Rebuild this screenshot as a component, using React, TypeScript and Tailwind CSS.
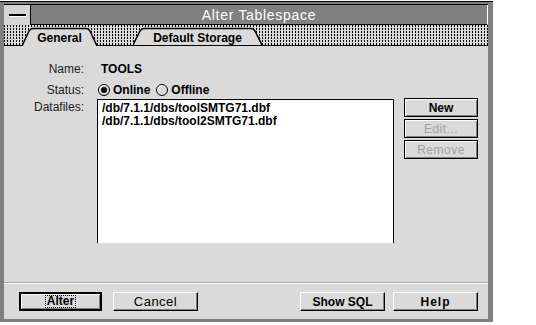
import React from 'react';

const face = 'bg-[#dadada]';

function Tab({ label, width, active }: { label: string; width: number; active?: boolean }) {
  const w = width;
  const h = active ? 21 : 20;
  return (
    <div className={`relative h-full flex items-center justify-center pt-[5px] ${active ? '' : 'border-b border-black'}`} style={{ width: w }}>
      <svg className="absolute inset-0" width={w} height={h} viewBox={`0 0 ${w} ${h}`}>
        <path
          d={`M0,${h} L7,6 Q8.5,3.5 11,3.5 L${w - 11},3.5 Q${w - 8.5},3.5 ${w - 7},6 L${w},${h}`}
          fill="#dadada"
          stroke="#000"
          strokeWidth={1.5}
        />
      </svg>
      <span className="relative font-bold text-[12px] leading-none text-black">{label}</span>
    </div>
  );
}

function Radio({ on }: { on?: boolean }) {
  return (
    <span className="w-[12px] h-[12px] rounded-full border border-black bg-[#dadada] flex items-center justify-center shadow-[inset_1px_1px_0_#ffffff]">
      {on && <span className="w-[6px] h-[6px] rounded-full bg-black" />}
    </span>
  );
}

function SideButton({ children, disabled }: { children: React.ReactNode; disabled?: boolean }) {
  return (
    <div className={`w-[74px] h-[19px] ${face} border border-black shadow-[inset_1px_1px_0_#ffffff,inset_-1px_-1px_0_#808080] flex items-center justify-center text-[12px] leading-none ${disabled ? 'text-[#a0a0a0] tracking-[0.5px]' : 'font-bold text-black'}`}>
      {children}
    </div>
  );
}

function BottomButton({ children, className = '' }: { children: React.ReactNode; className?: string }) {
  return (
    <div className={`w-[85px] h-[19px] ${face} border border-t-white border-l-white border-r-black border-b-black shadow-[inset_-1px_-1px_0_#808080] flex items-center justify-center text-[12px] leading-none text-black ${className}`}>
      {children}
    </div>
  );
}

export default function App() {
  return (
    <div className="w-[536px] h-[325px] bg-white font-['Liberation_Sans',Arial,sans-serif] text-black">
      <div className="mt-[1px] w-[493px] h-[321px] bg-[#808080] border-t border-black pt-[2px] pl-[4px] pr-[5px] pb-[3px] flex flex-col">
        {/* title bar */}
        <div className="flex h-[21px] border-t border-black">
          <div className="w-[27px] bg-[#d4d4d4] border-r border-black flex items-center justify-center">
            <div className="w-[17px] h-[3px] bg-white border-t-2 border-black" />
          </div>
          <div className="flex-1 bg-[#808080] border-r border-white border-b border-b-black flex items-center justify-center text-white text-[14px] tracking-[0.7px] leading-none">
            Alter Tablespace
          </div>
        </div>

        {/* tab strip */}
        <div className="flex items-end h-[21px] bg-[#d8d8d8] bg-[conic-gradient(at_1px_2px,transparent_75%,#000_0)] bg-[length:3px_3px]">
          <div className="w-[18px] h-full border-b border-black" />
          <Tab label="General" width={75} active />
          <div className="w-[36px] h-full border-b border-black" />
          <Tab label="Default Storage" width={129} />
          <div className="flex-1 h-full border-b border-black" />
        </div>

        {/* body */}
        <div className={`flex-1 ${face} flex flex-col`}>
          <div className="flex-1 pt-[16px] text-[12px]">
            <div className="flex items-center h-[14px]">
              <div className="w-[80px] text-right text-[#202020]">Name:</div>
              <div className="ml-[17px] font-bold">TOOLS</div>
            </div>
            <div className="flex items-center h-[14px] mt-[7px]">
              <div className="w-[80px] text-right text-[#202020]">Status:</div>
              <div className="ml-[14px] flex items-center">
                <Radio on />
                <span className="ml-[3px] font-bold">Online</span>
                <span className="ml-[6px]"><Radio /></span>
                <span className="ml-[3px] font-bold">Offline</span>
              </div>
            </div>
            <div className="flex mt-[2px]">
              <div className="w-[80px] text-right text-[#202020] pt-[1px] leading-[14px]">Datafiles:</div>
              <div className="ml-[13px] w-[297px] h-[144px] bg-white border-t border-l border-r border-black pl-[4px] pt-[2px] font-bold leading-[12.5px]">
                <div>/db/7.1.1/dbs/toolSMTG71.dbf</div>
                <div>/db/7.1.1/dbs/tool2SMTG71.dbf</div>
              </div>
              <div className="ml-[10px] flex flex-col gap-[2px] -mt-[1px]">
                <SideButton>New</SideButton>
                <SideButton disabled>Edit...</SideButton>
                <SideButton disabled>Remove</SideButton>
              </div>
            </div>
          </div>

          <div className="h-[2px] border-t border-[#a8a8a8] bg-white" />

          <div className="h-[35px] pt-[8px] pl-[15px] flex">
            <div className={`w-[83px] h-[19px] ${face} border-2 border-black shadow-[inset_1px_1px_0_#ffffff,inset_-1px_-1px_0_#808080] flex items-center justify-center`}>
              <span className="border border-dotted border-black px-[1px] font-bold text-[12px] leading-[11px]">Alter</span>
            </div>
            <BottomButton className="ml-[11px] tracking-[0.5px] text-[13px]">Cancel</BottomButton>
            <BottomButton className="ml-[102px] font-bold">Show SQL</BottomButton>
            <BottomButton className="ml-[8px] font-bold tracking-[1px]">Help</BottomButton>
          </div>
        </div>
      </div>
    </div>
  );
}
